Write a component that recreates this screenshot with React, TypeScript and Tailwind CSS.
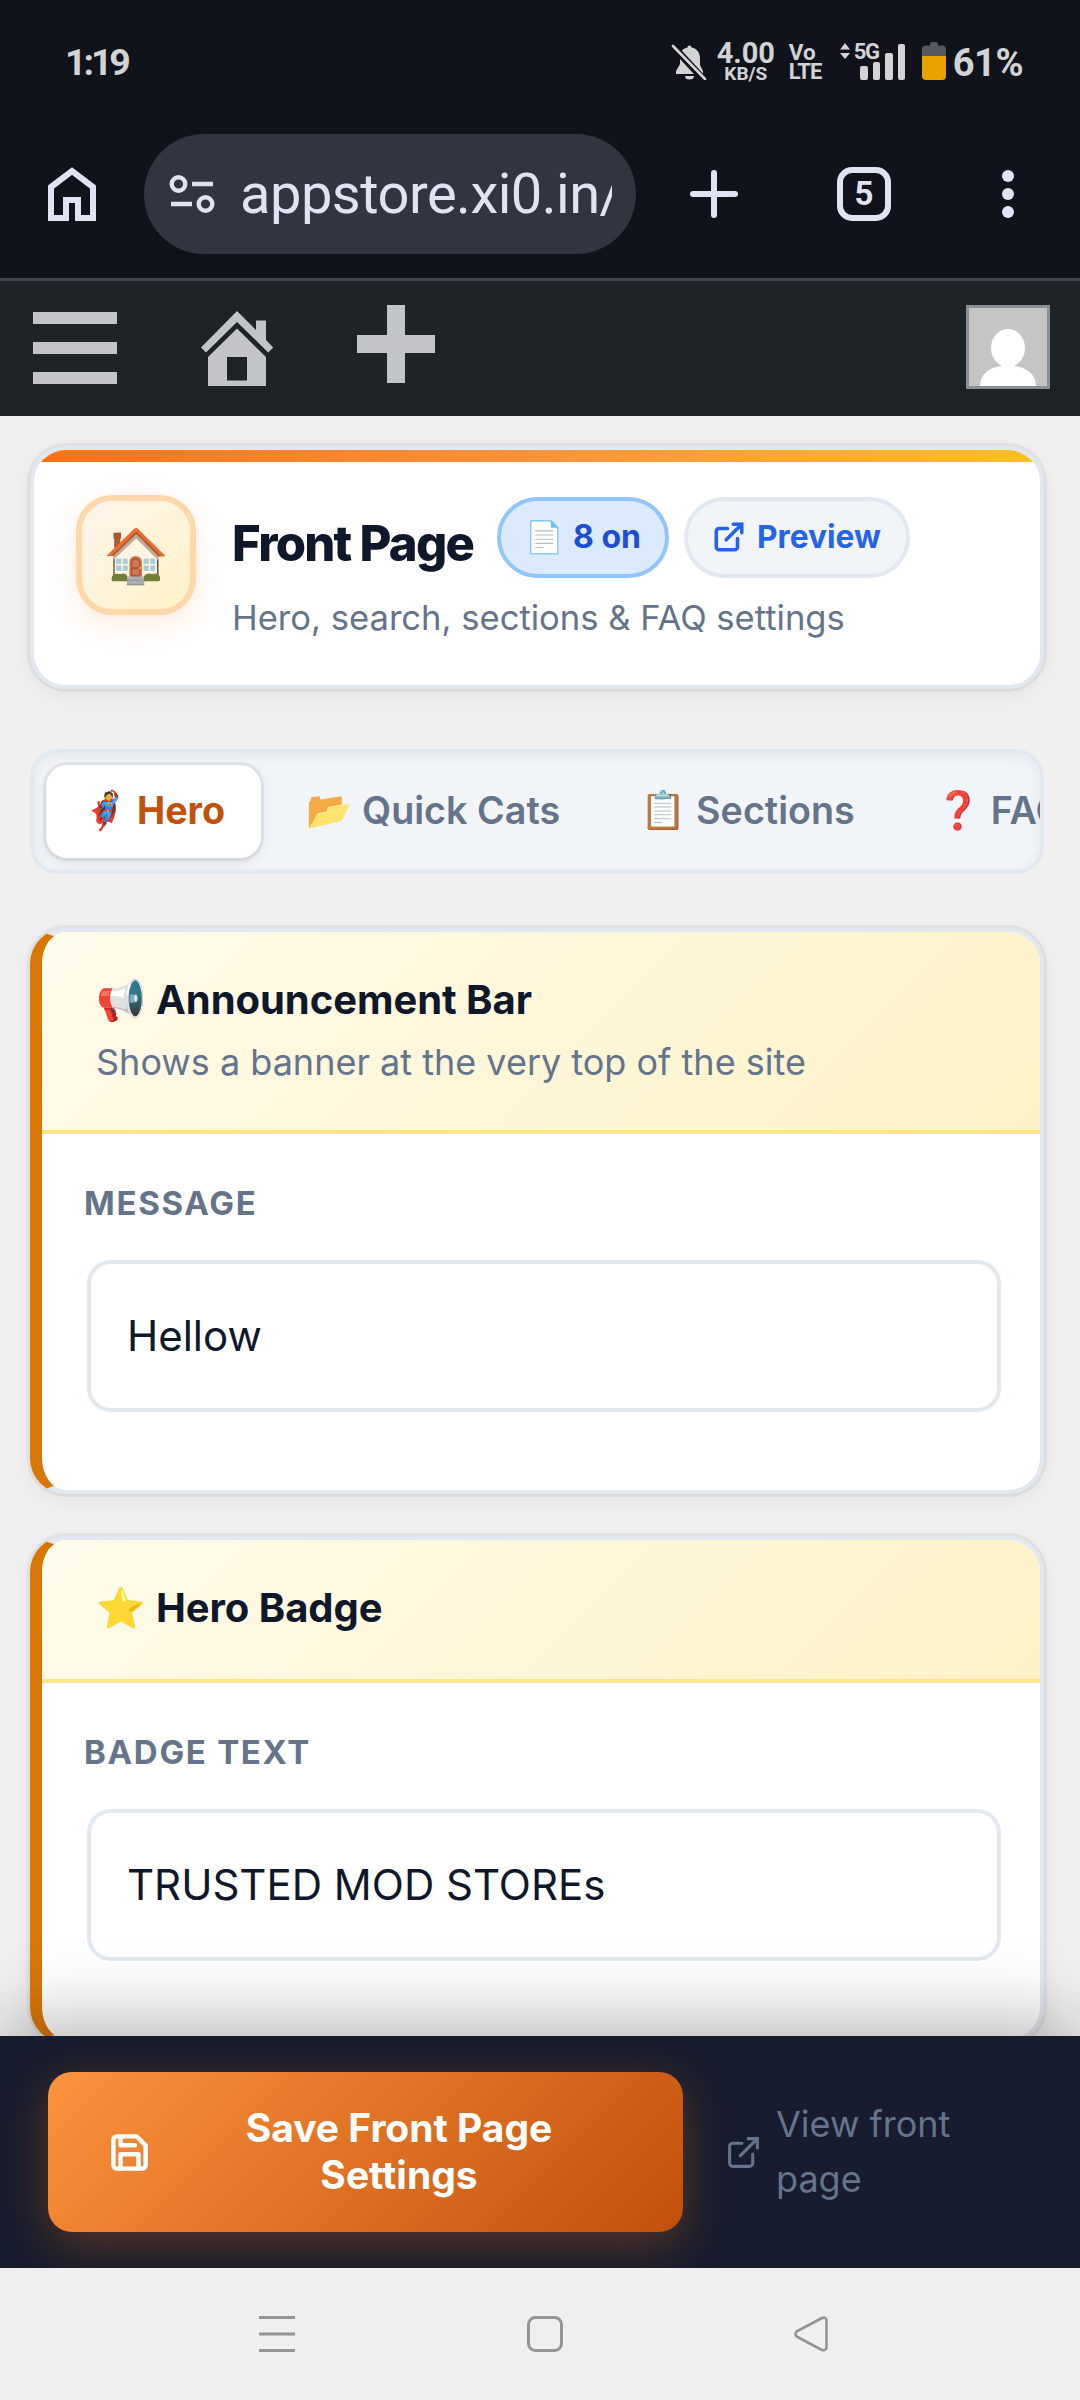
import React from "react";

function StatusBar() {
  return (
    <div className="flex h-[124px] items-start pl-[65px] pr-[57px] font-['Roboto',sans-serif] font-bold text-[#d2d3d5]">
      <span className="mt-[38px] text-[37.500px] leading-[48px] font-bold tracking-[-3.100px]">1:19</span>
      <div className="ml-auto flex items-start">
        <svg className="mt-[43px] h-[37px] w-[37px]" viewBox="0 0 37 37" fill="#d2d3d5">
          <path d="M10 9C12 6 14 5 16.500 4.500a2 2 0 0 1 4 0C26 5.500 29 10 29 15v7l3 6v3H5v-3l4-7v-8z" />
          <path d="M14 33h9a4.500 3.500 0 0 1-9 0z" />
          <path d="M0 1L35 39" stroke="#10131c" strokeWidth="7" />
          <path d="M2 3L34 36" stroke="#d2d3d5" strokeWidth="2.600" strokeLinecap="round" />
        </svg>
        <div className="mt-[42px] ml-[8px] flex w-[60px] flex-col items-center">
          <span className="text-[29px] leading-[23px] whitespace-nowrap">4.00</span>
          <span className="text-[19px] leading-[17px] whitespace-nowrap">KB/S</span>
        </div>
        <div className="mt-[43px] ml-[13px] flex w-[34px] flex-col">
          <span className="text-[22.500px] leading-[19px]">Vo</span>
          <span className="text-[22px] leading-[19px] tracking-[-1px]">LTE</span>
        </div>
        <svg className="mt-[43px] ml-[16px] h-[17px] w-[12px]" viewBox="0 0 12 17" fill="#d2d3d5">
          <path d="M6 0l5 6.500H1zM6 16L1 10h10z" />
        </svg>
        <div className="relative ml-[3px] h-[80px] w-[52px]">
          <span className="absolute top-[42px] left-0 text-[22px] leading-[20px] tracking-[-1.500px]">5G</span>
          <div className="flex h-[80px] items-end gap-[5px] pl-[6px]">
            <i className="h-[14px] w-[8px] rounded-[2px] bg-[#d2d3d5]" />
            <i className="h-[18px] w-[7px] rounded-[2px] bg-[#d2d3d5]" />
            <i className="h-[27px] w-[8px] rounded-[2px] bg-[#d2d3d5]" />
            <i className="h-[36px] w-[7px] rounded-[2px] bg-[#d2d3d5]" />
          </div>
        </div>
        <svg className="mt-[42px] ml-[16px] h-[38px] w-[24px]" viewBox="0 0 24 38">
          <path d="M4 3.500H8Q8 0 10 0h4q2 0 2 3.500h4q4 0 4 4V14H0V7.500q0-4 4-4z" fill="#565960" />
          <path d="M0 14h24v20q0 4-4 4H4q-4 0-4-4z" fill="#e8a200" />
        </svg>
        <span className="mt-[39px] ml-[7px] text-[38px] leading-[48px] font-bold tracking-[-0.500px]">61%</span>
      </div>
    </div>
  );
}

function BrowserBar() {
  return (
    <div className="flex h-[157px] items-start border-b-[3px] border-[#444651] pt-[10px] pl-[48px]">
      <svg className="mt-[33px] h-[54px] w-[48px]" viewBox="0 0 48 54" fill="none" stroke="#e1e3f2" strokeWidth="6">
        <path d="M3 20L24 4l21 16v31H30V33H18v18H3z" />
      </svg>
      <div className="ml-[48px] flex h-[120px] w-[492px] items-center rounded-full bg-[#32343f] pl-[25px]">
        <svg className="h-[38px] w-[46px] shrink-0" viewBox="0 0 46 38" fill="none" stroke="#e1e3f2">
          <circle cx="9.500" cy="9" r="6.800" strokeWidth="4.400" />
          <circle cx="36.500" cy="29" r="6.800" strokeWidth="4.400" />
          <path d="M23 9h21M2 29h21" strokeWidth="4.400" />
        </svg>
        <div className="ml-[25px] w-[372px] overflow-hidden font-['Roboto',sans-serif] text-[56px] leading-[80px] tracking-[-0.500px] whitespace-nowrap text-[#e1e3f2]">
          <span>appstore.xi0.in/</span>
        </div>
      </div>
      <svg className="mt-[36px] ml-[54px] h-[48px] w-[48px]" viewBox="0 0 48 48" fill="none" stroke="#e1e3f2" strokeWidth="6" strokeLinecap="round">
        <path d="M24 3v42M3 24h42" />
      </svg>
      <div className="mt-[33px] ml-[99px] flex h-[54px] w-[54px] items-center justify-center rounded-[15px] border-[6px] border-[#e1e3f2] font-['Roboto',sans-serif] text-[33px] leading-[40px] font-bold text-[#e1e3f2]">
        <span>5</span>
      </div>
      <div className="mt-[36px] ml-[111px] flex flex-col gap-[6px]">
        <i className="h-[12px] w-[12px] rounded-full bg-[#e1e3f2]" />
        <i className="h-[12px] w-[12px] rounded-full bg-[#e1e3f2]" />
        <i className="h-[12px] w-[12px] rounded-full bg-[#e1e3f2]" />
      </div>
    </div>
  );
}

function AdminBar() {
  return (
    <div className="flex h-[135px] items-start bg-[#1d2327] pl-[33px]">
      <div className="mt-[31px] flex flex-col gap-[18px]">
        <i className="h-[12px] w-[84px] bg-[#c3c4c7]" />
        <i className="h-[12px] w-[84px] bg-[#c3c4c7]" />
        <i className="h-[12px] w-[84px] bg-[#c3c4c7]" />
      </div>
      <svg className="mt-[30px] ml-[84px] h-[76px] w-[72px]" viewBox="0 0 72 76" fill="#c3c4c7">
        <path d="M36 0L55 19V9.500h10V29l7.200 7.500-5 5L36 11 5 41.500l-5-5z" />
        <path fillRule="evenodd" d="M36 17.500L65 46v29H7V46zM26 46v23.500h20V46z" />
      </svg>
      <svg className="mt-[24px] ml-[84px] h-[78px] w-[78px]" viewBox="0 0 78 78" fill="#c3c4c7">
        <path d="M30 0h18v30h30v18H48v30H30V48H0V30h30z" />
      </svg>
      <div className="mt-[24px] mr-[30px] ml-auto h-[84px] w-[84px] border-[3px] border-[#8c8f94] bg-[#c5c5c5]">
        <svg viewBox="0 0 78 78" className="h-[78px] w-[78px]" fill="#fff">
          <ellipse cx="39" cy="40" rx="17" ry="19" />
          <path d="M32 54h14v4c14 2 21 10 21 20H11c0-10 7-18 21-20z" />
        </svg>
      </div>
    </div>
  );
}

function ExternalLinkIcon({ className, strokeWidth }: { className: string; strokeWidth: number }) {
  return (
    <svg className={className} viewBox="0 0 24 24" fill="none" stroke="currentColor" strokeWidth={strokeWidth} strokeLinecap="round" strokeLinejoin="miter">
      <path strokeLinejoin="round" d="M18 13v6a2 2 0 0 1-2 2H5a2 2 0 0 1-2-2V8a2 2 0 0 1 2-2h6" />
      <path d="M15 3h6v6M10 14L21 3" />
    </svg>
  );
}

function SaveIcon({ className }: { className: string }) {
  return (
    <svg className={className} viewBox="0 0 24 24" fill="none" stroke="currentColor" strokeWidth="2.500" strokeLinecap="round" strokeLinejoin="round">
      <path d="M19 21H5a2 2 0 0 1-2-2V5a2 2 0 0 1 2-2h11l5 5v11a2 2 0 0 1-2 2z" />
      <path d="M17 21v-8H7v8M7 3v5h8" />
    </svg>
  );
}

function HeaderCard() {
  return (
    <section className="relative mt-[30px] flex h-[243px] overflow-hidden rounded-[36px] border-[4px] border-[#e2e8f0] bg-white shadow-[0_0_0_3px_rgba(0,0,0,0.05),0_6px_24px_rgba(0,0,0,0.06)]">
      <div className="absolute inset-x-0 top-0 h-[12px] bg-[linear-gradient(90deg,#f97316,#fb923c_50%,#fbbf24)]" />
      <div className="mt-[45px] ml-[42px] flex h-[120px] w-[120px] shrink-0 items-center justify-center rounded-[36px] border-[6px] border-[#fed7aa] bg-[linear-gradient(135deg,#fff4ec,#fef3c7)] text-[53px] leading-none shadow-[0_9px_30px_rgba(249,115,22,0.15)]">
        <span>🏠</span>
      </div>
      <div className="ml-[36px] pt-[47px]">
        <div className="flex items-start">
          <h1 className="mt-[17px] w-[265px] text-[49px] leading-[60px] font-extrabold tracking-[-1.750px] whitespace-nowrap text-[#0f172a]"><span>Front Page</span></h1>
          <div className="flex h-[81px] w-[172px] items-center rounded-full border-[4px] border-[#93c5fd] bg-[#dbeafe] pb-[1px] pl-[24px] text-[32px] leading-[40px] font-bold whitespace-nowrap text-[#1d4ed8]">
            <span className="w-[48px] text-[31px]">📄</span><span>8 on</span>
          </div>
          <div className="ml-[15px] flex h-[81px] w-[226px] items-center rounded-full border-[4px] border-[#e2e8f0] bg-[#f1f5f9] pb-[1px] pl-[24px] text-[31.700px] leading-[40px] font-bold text-[#2563eb]">
            <ExternalLinkIcon className="mr-[11px] h-[34px] w-[34px]" strokeWidth={2.5} /><span>Preview</span>
          </div>
        </div>
        <p className="mt-[11px] text-[34.600px] leading-[56px] whitespace-nowrap text-[#64748b]"><span>Hero, search, sections &amp; FAQ settings</span></p>
      </div>
    </section>
  );
}

function Tab({ icon, label }: { icon: string; label: string }) {
  return (
    <div className="flex shrink-0 items-center text-[#64748b]">
      <span className="w-[56px] text-[37px]">{icon}</span>
      <span>{label}</span>
    </div>
  );
}

function Tabs() {
  return (
    <nav className="mt-[60px] flex h-[125px] overflow-hidden rounded-[28px] border-[4px] border-[#e2e8f0] bg-[#f1f5f9] text-[37.700px] leading-[48px] font-semibold whitespace-nowrap shadow-[inset_0_3px_12px_rgba(0,0,0,0.06)]">
      <div className="mt-[12px] ml-[12px] flex h-[93px] w-[215px] shrink-0 items-center rounded-[21px] bg-white pb-[3px] pl-[36px] font-bold text-[#c2510c] shadow-[0_0_0_3px_rgba(0,0,0,0.06),0_3px_12px_rgba(0,0,0,0.1)]">
        <span className="w-[55px] text-[37px]">🦸</span>
        <span>Hero</span>
      </div>
      <div className="ml-[45px] flex h-[114px] items-center gap-[80px]">
        <Tab icon="📂" label="Quick Cats" />
        <Tab icon="📋" label="Sections" />
        <Tab icon="❓" label="FAQ" />
      </div>
    </nav>
  );
}

type FieldCardProps = {
  className: string;
  headerClass: string;
  icon: string;
  title: string;
  description?: string;
  label: string;
  value: string;
};

function FieldCard({ className, headerClass, icon, title, description, label, value }: FieldCardProps) {
  return (
    <section className={`${className} shrink-0 overflow-hidden rounded-[36px] border-[4px] border-l-[12px] border-[#e2e8f0] border-l-[#d97706] bg-white shadow-[0_0_0_3px_rgba(0,0,0,0.05),0_6px_24px_rgba(0,0,0,0.06)]`}>
      <header className={`${headerClass} border-b-[4px] border-[#fde68a] bg-[linear-gradient(135deg,#fffbeb,#fdf1c6)] pt-[44px] pl-[54px] whitespace-nowrap`}>
        <h2 className="flex text-[40px] leading-[48px] font-bold text-[#0f172a]">
          <span className="w-[60px] text-[40px]">{icon}</span>
          <span className="tracking-[-0.050px]">{title}</span>
        </h2>
        {description && <p className="mt-[10px] text-[36px] leading-[56px] text-[#64748b]"><span>{description}</span></p>}
      </header>
      <div className="pr-[39px] pl-[41px]">
        <label className="block pt-[45px] pl-[1px] text-[33px] leading-[48px] font-bold tracking-[1.700px] whitespace-nowrap text-[#64748b]"><span>{label}</span></label>
        <div className="mt-[33px] mb-[78px] ml-[4px] flex h-[152px] items-center rounded-[24px] border-[4px] border-[#e2e8f0] bg-white pl-[36px] text-[42px] leading-[56px] whitespace-nowrap text-[#0f172a]">
          <span>{value}</span>
        </div>
      </div>
    </section>
  );
}

function SaveBar() {
  return (
    <footer className="relative z-10 h-[232px] bg-[#171c2e] shadow-[0_-12px_72px_rgba(0,0,0,0.3)]">
      <div className="flex h-full overflow-hidden pt-[36px] pl-[48px]">
        <div className="flex h-[160px] w-[635px] shrink-0 items-center rounded-[24px] bg-[linear-gradient(135deg,#fb923c,#c2500a)] pl-[60px] text-white shadow-[0_12px_48px_rgba(249,115,22,0.3)]">
          <SaveIcon className="h-[43px] w-[43px]" />
          <div className="ml-[73px] flex w-[350px] flex-col items-center pb-[2px] text-[39px] leading-[47px] font-bold whitespace-nowrap">
            <span>Save Front Page</span>
            <span>Settings</span>
          </div>
        </div>
        <div className="flex h-[160px] items-center pl-[42px] text-[#64748b]">
          <ExternalLinkIcon className="h-[37px] w-[37px]" strokeWidth={2} />
          <div className="ml-[14px] flex flex-col items-start text-[36px] leading-[55px] whitespace-nowrap">
            <span>View front</span>
            <span>page</span>
          </div>
        </div>
      </div>
    </footer>
  );
}

function SystemNav() {
  return (
    <div className="relative z-10 flex h-[132px] items-start bg-[#efefef] pt-[48px] pl-[259px]">
      <svg className="h-[36px] w-[36px]" viewBox="0 0 36 36" fill="none" stroke="#949494" strokeWidth="3">
        <path d="M0 1.500h36M0 18h36M0 34.500h36" />
      </svg>
      <svg className="ml-[232px] h-[36px] w-[36px]" viewBox="0 0 36 36" fill="none" stroke="#949494" strokeWidth="3">
        <rect x="1.500" y="1.500" width="33" height="33" rx="7" />
      </svg>
      <svg className="ml-[231px] h-[36px] w-[34px]" viewBox="0 0 34 36" fill="none" stroke="#949494" strokeWidth="2.600" strokeLinejoin="round">
        <path d="M2.500 15.500L28 2q4.500-1.500 4.500 3v26q0 4-4.500 3L2.500 20.500q-2-2.500 0-5z" />
      </svg>
    </div>
  );
}

export default function App() {
  return (
    <div className="flex h-[2400px] w-[1080px] flex-col overflow-hidden bg-[#10131c] font-['Inter',sans-serif]">
      <StatusBar />
      <BrowserBar />
      <AdminBar />
      <main className="h-[1620px] shrink-0 overflow-hidden bg-[#f0f0f0] pr-[36px] pl-[30px]">
        <HeaderCard />
        <Tabs />
        <FieldCard className="mt-[54px]" headerClass="h-[202px]" icon="📢" title="Announcement Bar" description="Shows a banner at the very top of the site" label="MESSAGE" value="Hellow" />
        <FieldCard className="mt-[42px]" headerClass="h-[143px]" icon="⭐" title="Hero Badge" label="BADGE TEXT" value="TRUSTED MOD STOREs" />
      </main>
      <SaveBar />
      <SystemNav />
    </div>
  );
}
